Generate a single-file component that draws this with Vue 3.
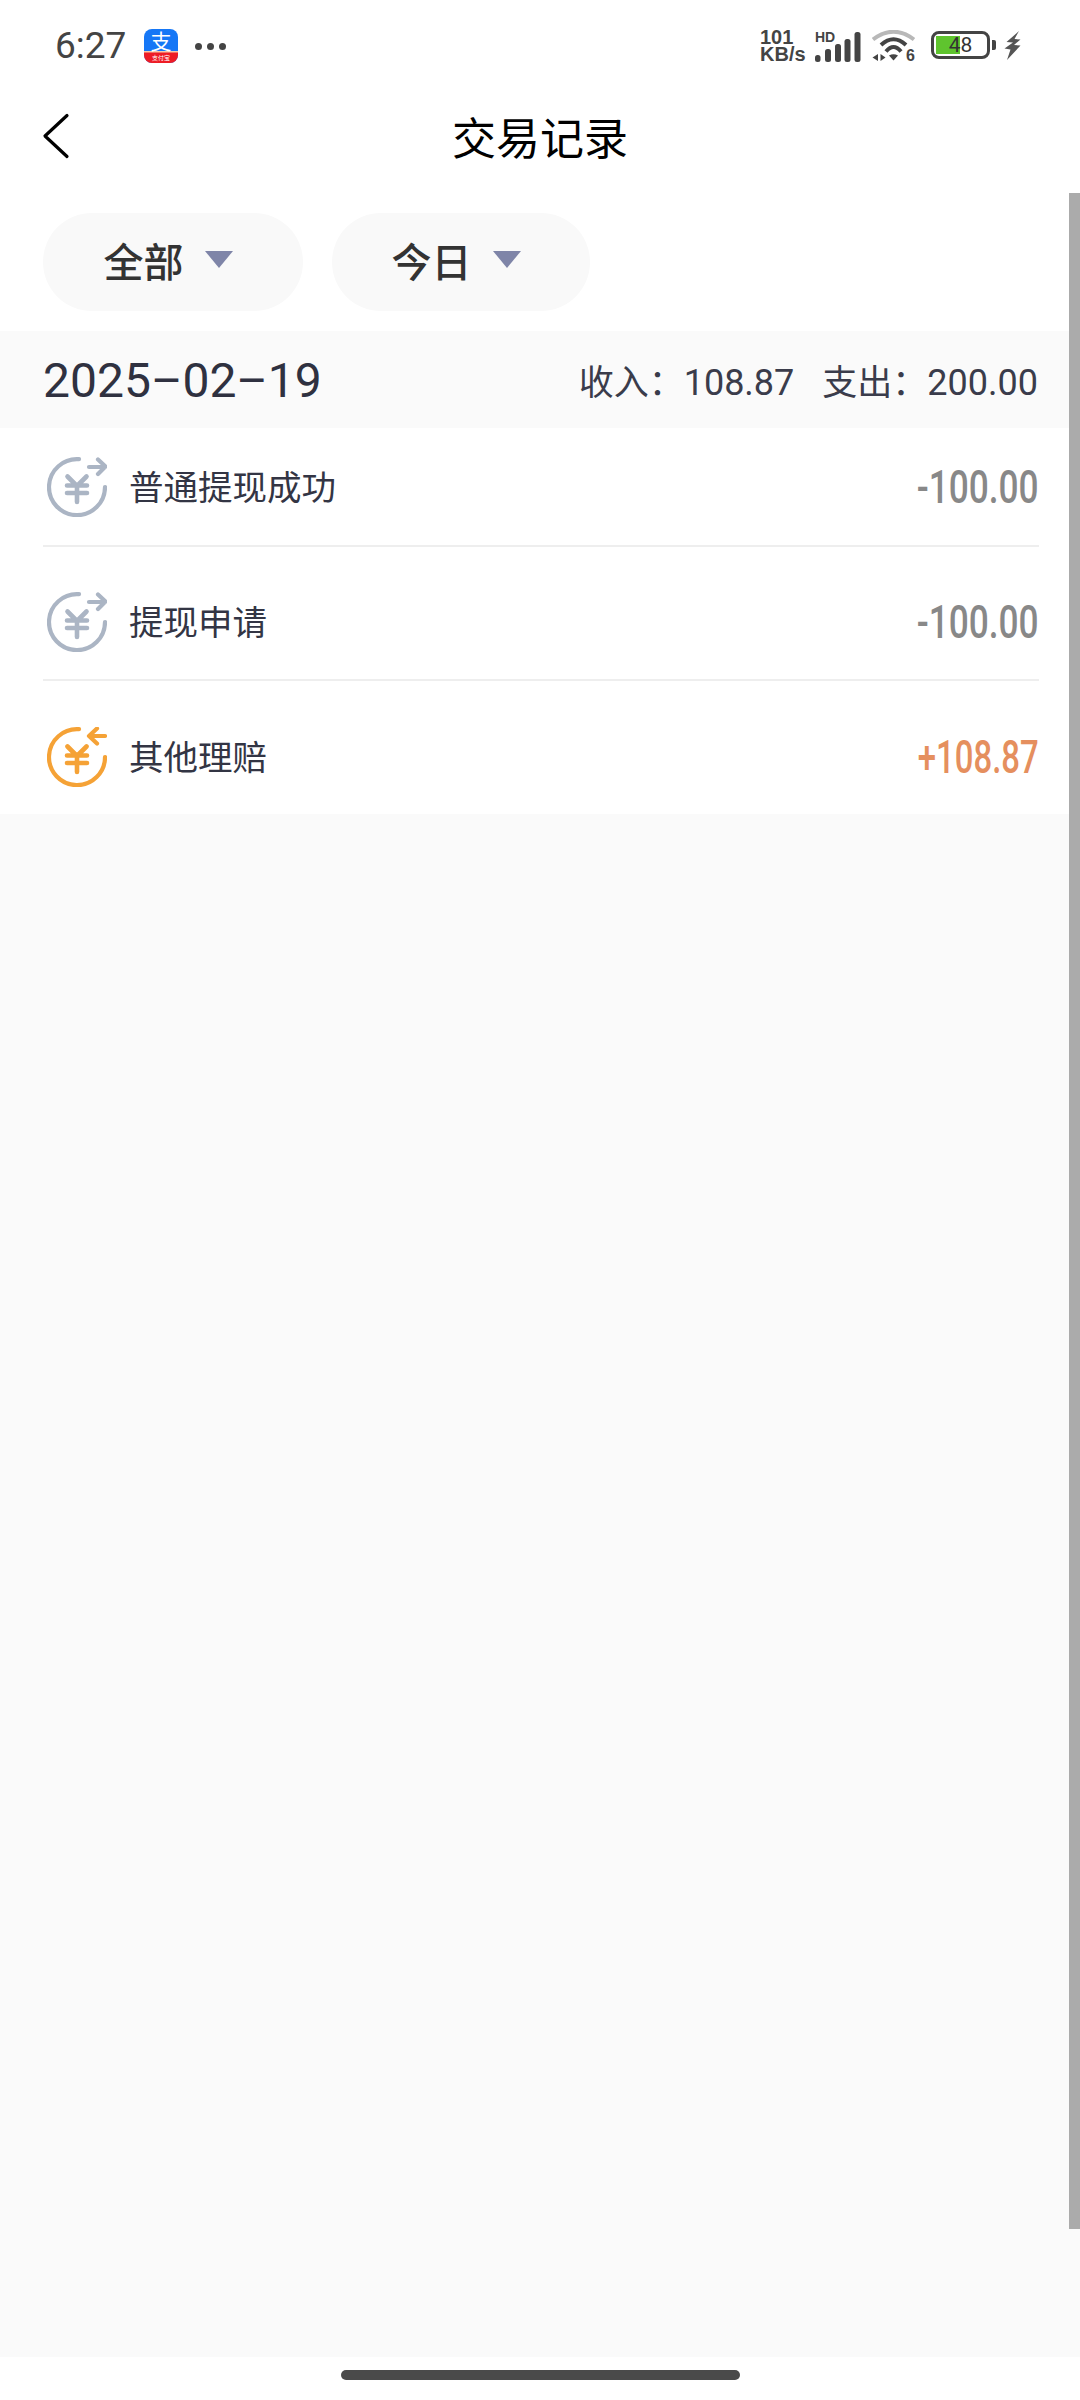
<template>
  <div class="page">
    <div class="status-bar">
      <div class="status-left">
        <span class="time">6:27</span>
        <svg class="pay-logo" width="34" height="34" viewBox="0 0 34 34">
          <defs>
            <clipPath id="logo-clip"><rect width="34" height="34" rx="8" /></clipPath>
          </defs>
          <g clip-path="url(#logo-clip)">
            <rect width="34" height="34" fill="#1677f6" />
            <rect y="23" width="34" height="11" fill="#ee1c25" />
            <rect y="22" width="34" height="1.5" fill="#f6c8a8" />
          </g>
          <text x="17" y="20" class="logo-main">支</text>
          <text x="17" y="31" class="logo-sub">支付宝</text>
        </svg>
        <div class="dots"><i></i><i></i><i></i></div>
      </div>
      <div class="status-right">
        <div class="net-speed"><span>101</span><span>KB/s</span></div>
        <svg class="signal" width="46" height="32" viewBox="0 0 46 32">
          <text x="0" y="11" class="hd">HD</text>
          <rect x="0" y="24" width="5.500" height="7" rx="2.500" fill="#444" />
          <rect x="10" y="18" width="6" height="13" rx="2.500" fill="#444" />
          <rect x="20" y="13" width="6" height="18" rx="2.500" fill="#444" />
          <rect x="29.500" y="8" width="6" height="23" rx="2.500" fill="#444" />
          <rect x="39.500" y="1" width="6" height="30" rx="2.500" fill="#444" />
        </svg>
        <svg class="wifi" width="44" height="32" viewBox="0 0 44 32">
          <path d="M1 9.500 Q21.500 -6 42 9.500" fill="none" stroke="#b8b8b8" stroke-width="4" />
          <path d="M9 15 Q21.500 3.500 34 15" fill="none" stroke="#444" stroke-width="4" />
          <path d="M14 21.500 Q21.500 12.500 29 21.500" fill="none" stroke="#444" stroke-width="4" />
          <path d="M17 25.500 Q21.500 23 26 25.500 L21.500 30.500 Z" fill="#444" />
          <path d="M6 24 V31 L0.500 27.500 Z" fill="#444" />
          <path d="M8.500 24 L13.500 27.500 L8.500 31 Z" fill="#444" />
          <text x="34" y="31" class="wifi-six">6</text>
        </svg>
        <div class="battery">
          <div class="battery-body">
            <div class="battery-fill" :style="{ width: batteryFill + 'px' }"></div>
            <span class="battery-level">{{ batteryLevel }}</span>
          </div>
          <div class="battery-cap"></div>
        </div>
        <svg class="bolt" width="17" height="29" viewBox="0 0 17 29">
          <path d="M15 0 L2.500 11 L9 11.500 L0.500 17.500 L6.500 18.500 L3 29 L16.500 14.500 L10 14 L16.500 8.500 L10.500 8 Z" fill="#555" />
        </svg>
      </div>
    </div>

    <div class="nav-bar">
      <svg class="back" width="28" height="46" viewBox="0 0 28 46">
        <path d="M25 2.500 L3 23 L25 43.500" fill="none" stroke="#000" stroke-width="3.200" stroke-linecap="round" stroke-linejoin="round" />
      </svg>
      <span class="nav-title">交易记录</span>
    </div>

    <div class="filters">
      <button v-for="f in filters" :key="f" class="pill">
        <span class="pill-label">{{ f }}</span>
        <i class="caret"></i>
      </button>
    </div>

    <div class="day-head">
      <span class="day-date">2025–02–19</span>
      <div class="day-sum">
        <span>收入：<b>108.87</b></span>
        <span>支出：<b>200.00</b></span>
      </div>
    </div>

    <div class="records">
      <div v-for="r in records" :key="r.title" class="record">
        <svg class="record-icon" width="60" height="60" viewBox="0 0 60 60" fill="none" :stroke="r.income ? '#f5a236' : '#abb5c4'" stroke-width="4.200" stroke-linecap="round" stroke-linejoin="round">
          <path d="M32 2.200 A28 28 0 1 0 58 30" />
          <path stroke-width="4.600" d="M20.500 19.500 L30 29 L39.500 19.500 M20 28.500 H40 M20 36 H40 M30 29 V45" />
          <path v-if="r.income" d="M58 9 H42 M50 1.500 L42 9 L50 16.500" />
          <path v-else d="M42 10 H58 M51 2.500 L58.500 9.500 L51 17" />
        </svg>
        <span class="record-title">{{ r.title }}</span>
        <span class="record-amount" :class="{ income: r.income }">{{ r.amount }}</span>
      </div>
    </div>

    <div class="empty"></div>
    <div class="home-area"><div class="home-bar"></div></div>

    <div class="scrollbar"></div>
  </div>
</template>

<script setup>
const batteryLevel = 48
const batteryFill = 24

const filters = ['全部', '今日']

const records = [
  { title: '普通提现成功', amount: '-100.00', income: false },
  { title: '提现申请', amount: '-100.00', income: false },
  { title: '其他理赔', amount: '+108.87', income: true }
]
</script>

<style>
html,
body {
  margin: 0;
  background: #fff;
}
</style>

<style scoped>
.page {
  position: relative;
  display: flex;
  flex-direction: column;
  width: 1080px;
  height: 2400px;
  overflow: hidden;
  background: #fff;
  font-family: Roboto, "Noto Sans CJK SC", sans-serif;
  color: #2f3140;
}

.status-bar {
  display: flex;
  justify-content: space-between;
  align-items: flex-start;
  height: 90px;
  padding: 24px 59px 0 55px;
  box-sizing: border-box;
}
.status-left {
  display: flex;
  align-items: center;
  height: 44px;
}
.time {
  width: 89px;
  font-size: 37px;
  line-height: 44px;
  color: #444;
}
.pay-logo {
  display: block;
}
.logo-main {
  font-size: 21px;
  fill: #fff;
  text-anchor: middle;
  font-family: "Noto Sans CJK SC", sans-serif;
}
.logo-sub {
  font-size: 6px;
  fill: #fff;
  text-anchor: middle;
  font-family: "Noto Sans CJK SC", sans-serif;
}
.dots {
  display: flex;
  gap: 5px;
  margin-left: 17px;
}
.dots i {
  width: 7px;
  height: 7px;
  border-radius: 50%;
  background: #444;
}

.status-right {
  display: flex;
  align-items: flex-start;
  padding-top: 5px;
  color: #444;
}
.net-speed {
  display: flex;
  flex-direction: column;
  width: 55px;
  font-family: "Liberation Sans", sans-serif;
  font-size: 20px;
  font-weight: 700;
  line-height: 17px;
}
.signal {
  display: block;
  margin-top: 2px;
}
.hd {
  font-family: "Liberation Sans", sans-serif;
  font-size: 14px;
  font-weight: 700;
  fill: #444;
}
.wifi {
  display: block;
  margin: 1px 0 0 11px;
}
.wifi-six {
  font-family: "Liberation Sans", sans-serif;
  font-size: 16px;
  font-weight: 700;
  fill: #444;
}
.battery {
  display: flex;
  align-items: center;
  margin: 2px 0 0 15px;
}
.battery-body {
  position: relative;
  width: 59px;
  height: 28px;
  box-sizing: border-box;
  border: 3px solid #444;
  border-radius: 8px;
  overflow: hidden;
}
.battery-fill {
  position: absolute;
  top: 2px;
  bottom: 2px;
  left: 2px;
  background: #5fc42e;
}
.battery-level {
  position: absolute;
  inset: 0;
  text-align: center;
  font-size: 21px;
  line-height: 22px;
  color: #333;
}
.battery-cap {
  width: 4px;
  height: 10px;
  margin-left: 2px;
  border-radius: 0 2px 2px 0;
  background: #444;
}
.bolt {
  display: block;
  margin: 2px 0 0 8px;
}

.nav-bar {
  position: relative;
  display: flex;
  align-items: center;
  justify-content: center;
  height: 92px;
}
.back {
  position: absolute;
  left: 42px;
  top: 23px;
}
.nav-title {
  font-size: 44px;
  color: #000;
}

.filters {
  display: flex;
  gap: 29px;
  padding: 31px 43px 20px;
}
.pill {
  display: flex;
  align-items: center;
  justify-content: center;
  gap: 21px;
  width: 260px;
  height: 98px;
  padding: 0 10px 5px 0;
  border: 0;
  border-radius: 49px;
  background: #f9f9f9;
  font-family: inherit;
  font-size: 40px;
  font-weight: 500;
  color: #333;
}
.pill + .pill {
  width: 258px;
}
.caret {
  width: 0;
  height: 0;
  border-left: 14px solid transparent;
  border-right: 14px solid transparent;
  border-top: 17px solid #7f85a8;
}

.day-head {
  display: flex;
  align-items: center;
  justify-content: space-between;
  height: 97px;
  padding: 0 42px 0 43px;
  background: #fafafa;
}
.day-date {
  font-size: 48px;
  padding-top: 2px;
}
.day-sum {
  display: flex;
  gap: 28px;
  font-size: 35px;
  color: #3a3c4b;
}
.day-sum b {
  font-size: 36px;
  font-weight: 400;
}

.records {
  padding: 0 41px 0 43px;
}
.record {
  display: flex;
  align-items: center;
  padding: 45px 0 27px;
  border-bottom: 2px solid #eeeeee;
}
.record:first-child {
  padding: 29px 0 28px;
}
.record:last-child {
  padding: 46px 0 27px;
  border-bottom: 0;
}
.record-icon {
  display: block;
  margin-left: 4px;
}
.record-title {
  flex: 1;
  margin: 0 0 4px 22px;
  font-size: 34.500px;
  color: #333544;
}
.record-amount {
  font-size: 47px;
  font-weight: 500;
  color: #888;
  transform: scaleX(0.75);
  transform-origin: right center;
  line-height: 60px;
}
.record-amount.income {
  color: #e58f5e;
  transform: scaleX(0.7);
}

.empty {
  flex: 1;
  background: #fafafa;
}
.home-area {
  display: flex;
  justify-content: center;
  height: 43px;
  padding-top: 13px;
  box-sizing: border-box;
}
.home-bar {
  width: 399px;
  height: 10px;
  border-radius: 5px;
  background: #4a4a4a;
}

.scrollbar {
  position: absolute;
  top: 193px;
  right: 0;
  width: 11px;
  height: 2036px;
  background: #ababab;
}
</style>
